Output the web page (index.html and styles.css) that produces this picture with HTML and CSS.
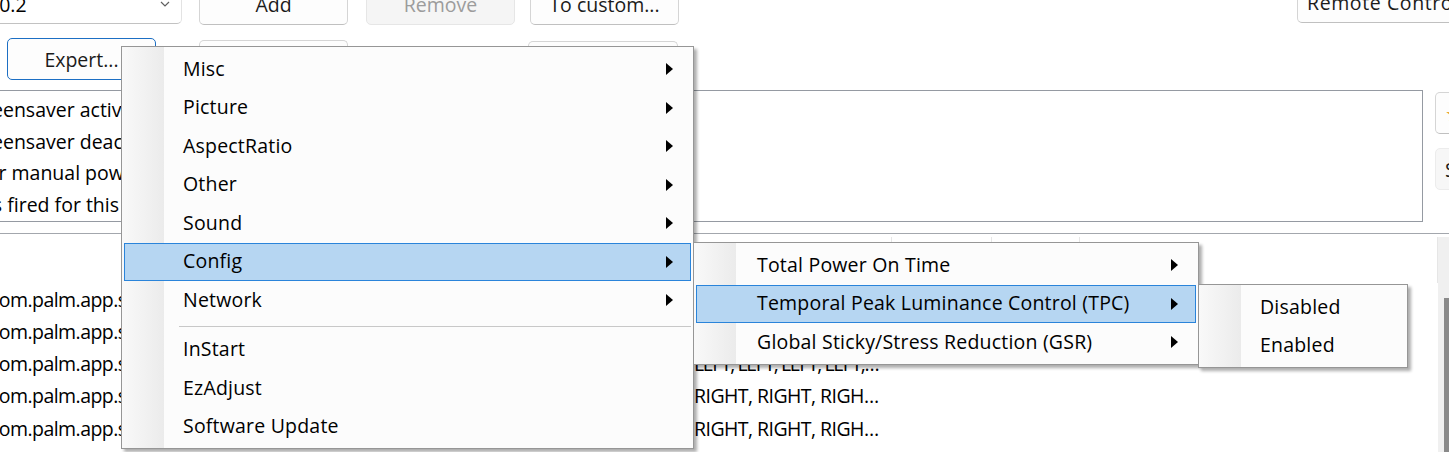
FILE: index.html
```html
<!DOCTYPE html>
<html lang="en">
<head>
    <meta charset="UTF-8">
    <title>Service Menu</title>
    <link rel="stylesheet" href="styles.css">
</head>
<body>
    <div class="window">
        <div class="toolbar">
            <div class="combo">
                <span>10.2</span>
                <svg class="chevron" width="10" height="6" viewBox="0 0 10 6"><path d="M1 1l4 4 4-4" fill="none" stroke="#606060" stroke-width="1.2"/></svg>
            </div>
            <button class="btn btn-add">Add</button>
            <button class="btn btn-remove" disabled>Remove</button>
            <button class="btn btn-custom">To custom...</button>
            <button class="btn btn-remote">Remote Control</button>
        </div>

        <div class="toolbar second">
            <button class="btn btn-expert">Expert...</button>
            <button class="btn btn-keys">Keys...</button>
            <button class="btn btn-macro">Macro...</button>
        </div>

        <div class="log-row">
            <div class="log">
                <div>Screensaver activated</div>
                <div>Screensaver deactivated</div>
                <div>User manual power off</div>
                <div>Was fired for this key</div>
            </div>
            <div class="side">
                <button class="btn side-btn first">&#9733;</button>
                <button class="btn side-btn">Save</button>
            </div>
        </div>

        <div class="list">
            <div class="list-body">
                <div class="list-head"><span></span><span></span><span></span><span></span><span></span></div>
                <div class="list-row"><span>com.palm.app.settings</span><span>UP, UP, UP, UP</span><span></span><span></span><span></span></div>
                <div class="list-row"><span>com.palm.app.settings</span><span>DOWN, DOWN</span><span></span><span></span><span></span></div>
                <div class="list-row"><span>com.palm.app.settings</span><span class="tight">LEFT, LEFT, LEFT, LEFT,…</span><span></span><span></span><span></span></div>
                <div class="list-row"><span>com.palm.app.settings</span><span>RIGHT, RIGHT, RIGH…</span><span></span><span></span><span></span></div>
                <div class="list-row"><span>com.palm.app.settings</span><span>RIGHT, RIGHT, RIGH…</span><span></span><span></span><span></span></div>
            </div>
            <div class="scrollbar"><div class="thumb"></div></div>
        </div>
    </div>

    <!-- context menus -->
    <div class="menu main-menu">
        <div class="item">Misc<span class="arrow"></span></div>
        <div class="item">Picture<span class="arrow"></span></div>
        <div class="item">AspectRatio<span class="arrow"></span></div>
        <div class="item">Other<span class="arrow"></span></div>
        <div class="item">Sound<span class="arrow"></span></div>
        <div class="item active">Config<span class="arrow"></span></div>
        <div class="item">Network<span class="arrow"></span></div>
        <div class="sep"></div>
        <div class="item">InStart</div>
        <div class="item">EzAdjust</div>
        <div class="item">Software Update</div>
    </div>

    <div class="menu sub-config">
        <div class="item">Total Power On Time<span class="arrow"></span></div>
        <div class="item active">Temporal Peak Luminance Control (TPC)<span class="arrow"></span></div>
        <div class="item">Global Sticky/Stress Reduction (GSR)<span class="arrow"></span></div>
    </div>

    <div class="menu sub-tpc">
        <div class="item">Disabled</div>
        <div class="item">Enabled</div>
    </div>
</body>
</html>
```

FILE: styles.css
```css
body {
    margin: 0;
    width: 1449px;
    height: 452px;
    overflow: hidden;
    position: relative;
    background: #fff;
    color: #000;
    font-family: "Open Sans", sans-serif;
    font-size: 19.5px;
    font-weight: 500;
}
.window {
    display: flex;
    flex-direction: column;
}

/* buttons */
.btn {
    box-sizing: border-box;
    flex: none;
    height: 38px;
    padding: 0;
    font: inherit;
    color: #1b1b1b;
    background: #fdfdfd;
    border: 1px solid #d5d5d5;
    border-bottom-color: #c0c0c0;
    border-radius: 5px;
}
.btn:disabled {
    color: #9c9c9c;
    background: #f5f5f5;
    border-color: #e6e6e6;
}

.toolbar {
    display: flex;
    align-items: flex-start;
    height: 38px;
    margin-top: -13px;
}
.toolbar .btn {
    padding-bottom: 4px;
}
.combo {
    box-sizing: border-box;
    flex: none;
    display: flex;
    align-items: center;
    width: 200px;
    height: 37px;
    margin-left: -18px;
    padding: 0 11px 2px 5px;
    background: #fff;
    border: 1px solid #e3e3e3;
    border-bottom-color: #c2c2c2;
    border-radius: 5px;
}
.chevron {
    margin-left: auto;
    margin-top: -2px;
}
.btn-add { width: 149px; margin-left: 17px; }
.btn-remove { width: 149px; margin-left: 18px; }
.btn-custom { width: 149px; margin-left: 15px; }
.btn-remote {
    width: 180px;
    margin: -2px -28px 0 auto;
    text-align: left;
    padding-left: 9px;
    letter-spacing: 0.6px;
}

.toolbar.second {
    height: 42px;
    margin-top: 13px;
}
.toolbar.second .btn {
    height: 42px;
    padding-bottom: 0;
}
.btn-expert {
    width: 149px;
    margin-left: 7px;
    border-color: #1c6fc4;
}
.btn-keys { width: 149px; margin-left: 43px; margin-top: 2px; }
.btn-macro { width: 150px; margin-left: 180px; margin-top: 3px; }

/* log box */
.log-row {
    display: flex;
    height: 132px;
    margin-top: 10px;
}
.log {
    box-sizing: border-box;
    flex: none;
    width: 1462px;
    margin-left: -39px;
    padding: 3px 2px;
    line-height: 31.5px;
    white-space: nowrap;
    background: #fff;
    border: 1px solid #959aa2;
}
.side {
    display: flex;
    flex-direction: column;
    margin-left: 12px;
}
.side-btn {
    width: 40px;
    height: 42px;
    margin-top: 2px;
    text-align: left;
    padding-left: 9px;
    overflow: hidden;
}
.side-btn.first {
    color: #e8a33a;
}
.side-btn + .side-btn {
    margin-top: 14px;
    background: #f7f7f7;
    border-color: #ececec;
}

/* list view */
.list {
    display: flex;
    height: 218px;
    margin-top: 11px;
    border-top: 1px solid #a3a7ad;
}
.list-body {
    flex: 1;
    overflow: hidden;
}
.list-head,
.list-row {
    display: grid;
    grid-template-columns: 700px 202px 100px 88px 1fr;
    margin-left: -10px;
    white-space: nowrap;
}
.list-head {
    height: 49px;
}
.list-head span {
    margin-top: 3px;
    border-right: 1px solid #e6e6e6;
}
.list-row {
    height: 32.25px;
    align-items: center;
    letter-spacing: -0.55px;
}
.list-row span {
    overflow: hidden;
}
.list-row span + span {
    padding-left: 4px;
}
.list-row .tight {
    letter-spacing: -1.4px;
}
.scrollbar {
    width: 11px;
    margin-top: 3px;
    background: #f0f0f0;
}
.thumb {
    width: 5px;
    height: 200px;
    margin: 61px 0 0 6px;
    background: #8a8a8a;
}

/* popup menus */
.menu {
    position: absolute;
    box-sizing: border-box;
    padding: 3px 2px 2px;
    background: linear-gradient(to right, #f9f9f9, #ebebeb) 0 0 / 42px 100% no-repeat, #fcfcfc;
    border: 1px solid #969696;
    box-shadow: 3px 3px 3px rgba(0, 0, 0, 0.32);
    white-space: nowrap;
    letter-spacing: 0.2px;
}
.main-menu { left: 121px; top: 46px; width: 573px; }
.sub-config { left: 693px; top: 242px; width: 506px; }
.sub-tpc { left: 1198px; top: 284px; width: 210px; }

.item {
    box-sizing: border-box;
    display: flex;
    align-items: center;
    height: 38.5px;
    padding: 0 17px 2px 58px;
    border: 1px solid transparent;
}
.sub-config .item {
    padding-left: 60px;
}
.item.active {
    background: #b6d6f2;
    border-color: #2a84da;
}
.arrow {
    margin-left: auto;
    margin-top: 2px;
    width: 0;
    height: 0;
    border-left: 7px solid #000;
    border-top: 6px solid transparent;
    border-bottom: 6px solid transparent;
}
.sep {
    height: 1px;
    margin: 6px 0 4px 55px;
    background: #c8c8c8;
}
```
